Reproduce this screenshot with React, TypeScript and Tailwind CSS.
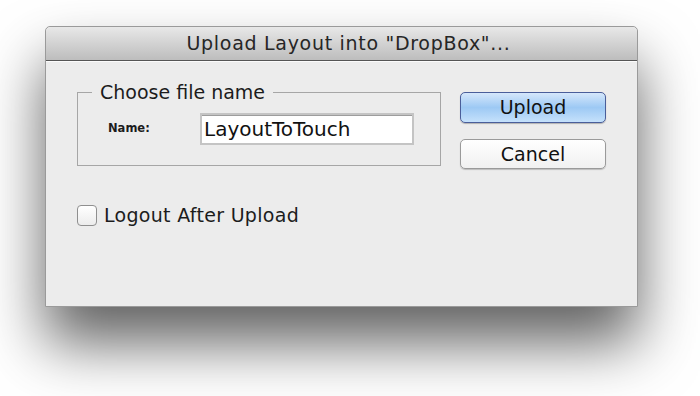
import { useState } from 'react';

export default function App() {
  const [name, setName] = useState('LayoutToTouch');
  const [logout, setLogout] = useState(false);

  return (
    <div className="w-[700px] h-[396px] bg-white overflow-hidden pt-[26px] pl-[45px] font-['DejaVu_Sans',sans-serif]">
      <div className="w-[593px] h-[281px] flex flex-col bg-[#ececec] border border-[#9a9a9a] rounded-t-[5px] shadow-[0_36px_60px_rgba(0,0,0,0.62)]">
        {/* title bar */}
        <div className="h-[34px] shrink-0 flex items-center justify-center pl-[14px] rounded-t-[5px] bg-gradient-to-b from-[#e8e8e8] to-[#bdbdbd] border-b border-[#555] text-[19px] text-[#262626] tracking-[0.7px]">
          Upload Layout into "DropBox"...
        </div>
        <div className="h-px bg-white/80" />

        <div className="flex-1 pl-[31px] pr-[31px] pt-[30px]">
          <div className="flex gap-[19px]">
            <fieldset className="w-[366px] h-[84px] border border-[#a6a6a6] px-[14px] pt-[11px] -mt-[10px]">
              <legend className="px-[8px] text-[19px] text-[#1c1c1c] leading-[20px]">Choose file name</legend>
              <div className="flex items-center">
                <label className="w-[108px] pl-[16px] text-[11.5px] font-bold text-[#1c1c1c]">Name:</label>
                <input
                  value={name}
                  onChange={e => setName(e.target.value)}
                  className="w-[214px] h-[32px] px-[2px] bg-white border-2 border-[#c4c4c4] shadow-[inset_0_1px_0_#9d9d9d] text-[20px] text-[#111] outline-none font-['DejaVu_Sans',sans-serif]"
                />
              </div>
            </fieldset>

            <div className="flex flex-col gap-[16px]">
              <button className="w-[146px] h-[31px] rounded-[5px] border border-[#4a5e9a] bg-gradient-to-b from-[#d5e7fb] via-[#9dc9f4] to-[#c5e1fb] text-[19px] text-[#111] shadow-[0_1px_1px_rgba(0,0,0,0.25)]">
                Upload
              </button>
              <button className="w-[146px] h-[30px] rounded-[5px] border border-[#9a9a9a] bg-gradient-to-b from-white to-[#f1f1f1] text-[19px] text-[#111] shadow-[0_1px_1px_rgba(0,0,0,0.2)]">
                Cancel
              </button>
            </div>
          </div>

          <label className="mt-[32px] flex items-center gap-[7px] text-[19px] tracking-[0.3px] text-[#1c1c1c] cursor-default">
            <span
              onClick={() => setLogout(!logout)}
              className="w-[20px] h-[21px] rounded-[4px] border border-[#8f8f8f] bg-gradient-to-b from-white to-[#ececec] flex items-center justify-center text-[13px]"
            >
              {logout ? '✓' : ''}
            </span>
            Logout After Upload
          </label>
        </div>
      </div>
    </div>
  );
}
